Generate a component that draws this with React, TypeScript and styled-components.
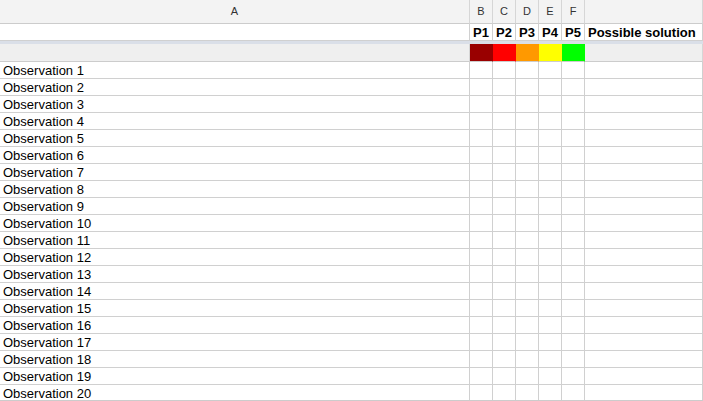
import React from "react";
import styled, { createGlobalStyle } from "styled-components";

const Global = createGlobalStyle`
  html, body { margin: 0; padding: 0; background: #ffffff; }
  body { font-family: "Liberation Sans", Arial, sans-serif; }
`;

const Sheet = styled.div`
  width: 703px;
  height: 401px;
  overflow: hidden;
  box-sizing: border-box;
  border-bottom: 1px solid #cccccc;
  display: grid;
  grid-template-columns: 470px repeat(5, 23px) 118px;
  grid-template-rows: 24px 17px 3px 18px;
  grid-auto-rows: 17px;
  align-content: start;
`;

const Cell = styled.div<{ $bold?: boolean }>`
  box-sizing: border-box;
  border-right: 1px solid #d0d0d0;
  border-bottom: 1px solid #d0d0d0;
  background: #ffffff;
  font-size: 13px;
  font-weight: ${(p) => (p.$bold ? 700 : 400)};
  line-height: 16px;
  color: #000000;
  padding: 1px 0 0 3px;
  white-space: nowrap;
  overflow: hidden;
`;

const HeadCell = styled.div`
  box-sizing: border-box;
  background: #f3f3f3;
  border-right: 1px solid #d6d6d6;
  border-bottom: 1px solid #cccccc;
  font-size: 11px;
  color: #333333;
  display: flex;
  align-items: center;
  justify-content: center;
  padding-bottom: 1px;
`;

const FrozenBar = styled.div`
  grid-column: 1 / -1;
  background: #dadfe8;
`;

const FrozenCell = styled.div<{ $bg?: string }>`
  box-sizing: border-box;
  background: ${(p) => p.$bg ?? "#efefef"};
  border-right: 1px solid ${(p) => p.$bg ?? "#d6d6d6"};
  border-bottom: 1px solid #cccccc;
`;

const letters = ["A", "B", "C", "D", "E", "F", ""];
const labels = ["", "P1", "P2", "P3", "P4", "P5", "Possible solution"];
const colors = [undefined, "#990000", "#ff0000", "#ff9900", "#ffff00", "#00ff00", undefined];

export default function App() {
  const rows = Array.from({ length: 20 }, (_, i) => `Observation ${i + 1}`);
  return (
    <>
      <Global />
      <Sheet>
        {letters.map((l, i) => (
          <HeadCell key={"h" + i}>{l}</HeadCell>
        ))}
        {labels.map((l, i) => (
          <Cell key={"l" + i} $bold>
            {l}
          </Cell>
        ))}
        <FrozenBar />
        {colors.map((c, i) => (
          <FrozenCell key={"f" + i} $bg={c} />
        ))}
        {rows.map((r) => (
          <React.Fragment key={r}>
            <Cell>{r}</Cell>
            {[0, 1, 2, 3, 4, 5].map((j) => (
              <Cell key={j} />
            ))}
          </React.Fragment>
        ))}
      </Sheet>
    </>
  );
}
